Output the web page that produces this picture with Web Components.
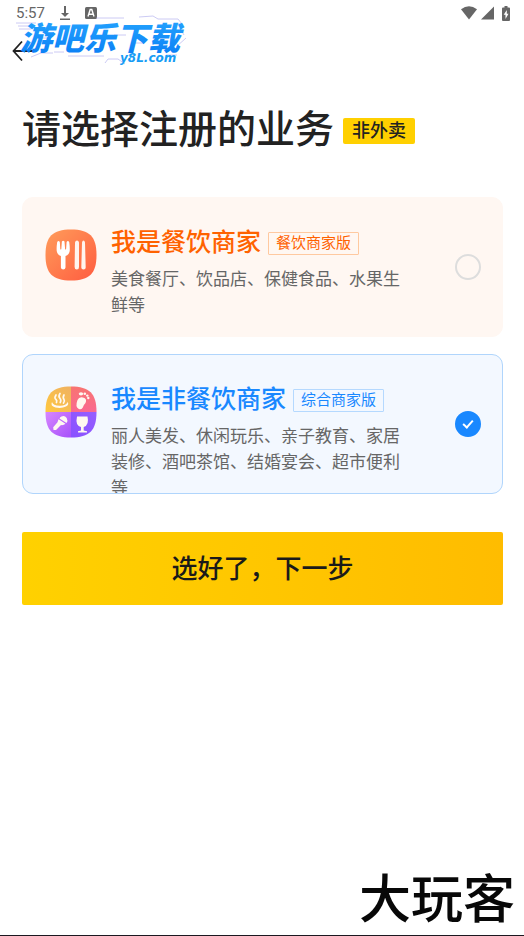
<!DOCTYPE html>
<html lang="zh-CN">
<head>
<meta charset="utf-8">
<meta name="viewport" content="width=device-width, initial-scale=1">
<title>请选择注册的业务</title>
<style>
html, body { margin: 0; min-height: 100%; }
body { background: #fff; color: #222; font-family: Roboto, "Noto Sans CJK SC", sans-serif; }
</style>
</head>
<body>
<register-page></register-page>

<template id="t-status">
<style>
:host { display: flex; align-items: center; height: 26px; padding: 0 14px 0 16px; color: #666; font: 15px/26px Roboto, sans-serif; }
svg { display: block; fill: currentColor; }
.left, .right { display: flex; align-items: center; }
.left { gap: 14px; }
.right { margin-left: auto; gap: 4px; }
.bat { margin-left: 4px; }
</style>
<div class="left"><span>5:57</span>
<svg width="12" height="16" viewBox="0 0 12 16"><path d="M5 1h2v7h3l-4 4-4-4h3zM1 13.500h10V15H1z"/></svg>
<svg width="12" height="12" viewBox="0 0 12 12"><rect width="12" height="12" rx="1.500"/><path d="M3 9.500 5.200 2.500h1.600L9 9.500M4 7.200h4" fill="none" stroke="#fff" stroke-width="1.400"/></svg>
</div>
<div class="right">
<svg width="16" height="14" viewBox="0 0 16 14"><path d="M0 3.200Q8-2.600 16 3.200L8 13.500z"/></svg>
<svg width="13" height="14" viewBox="0 0 13 14"><path d="M13 .5v13H0z"/></svg>
<svg class="bat" width="8" height="15" viewBox="0 0 8 15"><path d="M2.500 0h3v1.500H7q1 0 1 1V14q0 1-1 1H1q-1 0-1-1V2.500q0-1 1-1h1.500z"/><path d="M4.800 4 1.700 8.700h1.800V13l3-5.200H4.800z" fill="#fff"/></svg>
</div>
</template>

<template id="t-watermark">
<style>
:host { position: absolute; left: 16px; top: 12px; display: block; width: 176px; height: 56px; pointer-events: none; }
svg { display: block; width: 100%; height: 100%; }
text { font-family: "Noto Sans CJK SC", sans-serif; font-style: italic; font-weight: 900; }
.site { font-family: "DejaVu Sans", sans-serif; font-weight: 700; }
</style>
<svg viewBox="0 0 176 56">
<defs><linearGradient id="g" x1="0" y1="0" x2="0" y2="1"><stop offset="0" stop-color="#28a9ff"/><stop offset="1" stop-color="#087cf5"/></linearGradient></defs>
<g fill="none" stroke="#aaa9ed" stroke-width="1" opacity=".6"><path d="M0 11h20M2 14h14M3 17h12M15 45l10-4h12M38 40h10M52 44h36M89 51l3-4h10l7 5M80 6h28M123 5l14-1 5 3h20l4 5h-9M98 23h12M160 35l10-9M164 16l4 7M22 26h12M115 31h13M150 43h11"/></g>
<text x="4" y="38" font-size="32" fill="url(#g)">游吧乐下载</text>
<text class="site" x="104" y="50" font-size="12" fill="#169cf5">y8L.com</text>
</svg>
</template>

<template id="t-title">
<style>
:host { display: flex; align-items: center; gap: 9px; padding: 26px 0 0; }
h1 { margin: 0; font-size: 39px; line-height: 56px; font-weight: 500; white-space: nowrap; }
span { margin-top: 2px; padding: 0 9px; border-radius: 2px; background: #ffd000; font-size: 18px; line-height: 26px; font-weight: 500; white-space: nowrap; }
</style>
<h1><slot></slot></h1><span><slot name="badge"></slot></span>
</template>

<template id="t-card">
<style>
:host { --accent: #ff6200; --line: #ffc9a0; --fill: #fff7f2; --edge: #fff7f2; display: block; }
:host([tone="blue"]) { --accent: #1988ff; --line: #b5d9ff; --fill: #f3f8ff; --edge: #b0d5fc; }
label { display: flex; box-sizing: border-box; height: 140px; padding: 28px 21px 0 22px; overflow: hidden; border: 1px solid var(--edge); border-radius: 11px; background: var(--fill); cursor: pointer; }
.icon { flex: none; padding-top: 3px; }
.body { flex: 0 1 300px; margin-left: 14px; }
.head { display: flex; align-items: center; gap: 7px; }
h2 { margin: 0; color: var(--accent); font-size: 25px; line-height: 34px; font-weight: 500; white-space: nowrap; }
.tag { padding: 0 7px; border: 1px solid var(--line); border-radius: 1px; color: var(--accent); font-size: 15px; line-height: 21px; white-space: nowrap; }
p { margin: 6px 0 0; color: #666; font-size: 17px; line-height: 26px; }
input { appearance: none; flex: none; align-self: flex-start; box-sizing: border-box; width: 26px; height: 26px; margin: 28px 0 0 auto; border: 2px solid #ddd; border-radius: 50%; display: grid; place-items: center; cursor: pointer; }
input:checked { border-color: #1988ff; background: #1988ff; }
input:checked::before { content: ""; width: 8px; height: 4px; margin-bottom: 3px; border: solid #fff; border-width: 0 0 2px 2px; transform: rotate(-48deg); }
</style>
<label>
<span class="icon"><slot name="icon"></slot></span>
<span class="body"><span class="head"><h2><slot name="name"></slot></h2><span class="tag"><slot name="tag"></slot></span></span><p><slot></slot></p></span>
<input type="radio" name="business">
</label>
</template>

<template id="t-food">
<style>:host, svg { display: block; }</style>
<svg width="52" height="52" viewBox="0 0 52 52"><defs><linearGradient id="f" x1="0" y1="0" x2="1" y2="1"><stop stop-color="#ff9c5a"/><stop offset="1" stop-color="#ff5c40"/></linearGradient></defs>
<path d="M26 .5C44.500.5 51.500 7.500 51.500 26S44.500 51.500 26 51.500.5 44.500.5 26 7.500.5 26 .5z" fill="url(#f)"/>
<path d="M12.200 13q1.400-2 2.600 0l.5 7q.5 1 1 0l.6-7.500q1.300-1.700 2.600 0l.6 7.500q.5 1 1 0l.5-7q1.300-2 2.600 0 .8 5 .5 9-.7 4-4.200 5v11.500q-.2 2-2.300 2t-2.300-2V27q-3.500-1-4.200-5-.3-4 .5-9z" fill="#fff"/>
<path d="M30 13.500q.4-2 2-2t2 2v24.500q0 2.500-2.200 2.500T29.600 38zM37 13.500q.4-2 1.500-2t1.500 2l.7 25q0 2-2.200 2t-2.200-2z" fill="#fff4ee"/></svg>
</template>

<template id="t-leisure">
<style>:host, svg { display: block; }</style>
<svg width="52" height="52" viewBox="0 0 52 52"><defs>
<clipPath id="c"><path d="M26 .5C44.500.5 51.500 7.500 51.500 26S44.500 51.500 26 51.500.5 44.500.5 26 7.500.5 26 .5z"/></clipPath>
<linearGradient id="a" x1="0" y1="1" x2="1" y2="0"><stop stop-color="#ffc83f"/><stop offset="1" stop-color="#efb162"/></linearGradient>
<linearGradient id="b" x1="0" y1="0" x2="0" y2="1"><stop stop-color="#f87570"/><stop offset="1" stop-color="#f96991"/></linearGradient>
<linearGradient id="p" x1="0" y1="0" x2="1" y2="1"><stop stop-color="#d887ff"/><stop offset="1" stop-color="#a650fa"/></linearGradient>
<linearGradient id="v" x1="0" y1="1" x2="1" y2="0"><stop stop-color="#8950ff"/><stop offset="1" stop-color="#965fff"/></linearGradient></defs>
<g clip-path="url(#c)"><path d="M0 0h26v26H0z" fill="url(#a)"/><path d="M26 0h26v26H26z" fill="url(#b)"/><path d="M0 26h26v26H0z" fill="url(#p)"/><path d="M26 26h26v26H26z" fill="url(#v)"/></g>
<g fill="#fff8f0">
<path d="M7 16q-2 4 3.500 5.500 6 1.300 10.500-1 3.500-2 1.500-4.500-1.500 4-8 3.700Q8 19.500 7 16z"/>
<path d="M11 9q-2 3 0 4.500 1.200 1 .5 3M15 7.500q-2 3 0 5 1.500 1.500 .3 4M19 9q-1.500 2.500 0 4.500 1 1.500-.5 3.500" fill="none" stroke="#fff8f0" stroke-width="1.700" stroke-linecap="round"/>
<path d="M32.500 14q1.500-3.500 5.500-2.500 4.500 1 2.500 5.500-2 2-2.700 4.500-1.200 2.800-4.300 1.200-3.500-2-1-8.700z"/>
<ellipse cx="36" cy="7.800" rx="2.200" ry="1.600"/><circle cx="39.800" cy="7.700" r="1.300"/><circle cx="42.300" cy="9.600" r="1.200"/><circle cx="43.300" cy="12" r="1.200"/>
<path d="M16.500 30.500q3-1.500 5.200 1.500 1.500 2.500-.2 5l-7-4.500q.5-1.500 2-2z"/><path d="m13.500 33.300 7 4.500q-2 1.700-4.500 1.300l-5 5-2.500-.2-.3-2.600 4.300-5z"/>
<path d="M32 30.500h10.500q2 8.500-3.800 10.500v3.500l3.300.8v1.200h-9v-1.200l3-.8V41q-6-1.500-4-10.500z"/>
</g></svg>
</template>

<template id="t-page">
<style>
:host { position: relative; display: flex; flex-direction: column; box-sizing: border-box; min-height: 100vh; border-bottom: 1px solid #1c1820; }
nav { display: flex; height: 50px; padding-left: 10px; align-items: center; }
.back { display: grid; padding: 0; border: 0; background: none; color: #222; cursor: pointer; }
form { display: flex; flex-direction: column; padding: 0 21px 0 22px; }
.choices { display: flex; flex-direction: column; gap: 17px; margin: 39px 0 38px; }
.next { padding: 0 0 4px; border: 0; border-radius: 2px; background: linear-gradient(90deg, #ffd100, #ffbc00); color: #1a1a1a; font: 500 26px/69px "Noto Sans CJK SC", sans-serif; cursor: pointer; }
footer { margin-top: auto; padding-right: 9px; color: #080808; font-size: 52px; line-height: 68px; font-weight: 500; text-align: right; }
</style>
<status-bar></status-bar>
<nav><button class="back" type="button" aria-label="返回"><svg width="26" height="24" viewBox="0 0 26 24" fill="none" stroke="currentColor" stroke-width="1.800"><path d="M12 2.500 3.500 12l8.500 9.500M3.500 12H25"/></svg></button></nav>
<form>
<page-title>请选择注册的业务<span slot="badge">非外卖</span></page-title>
<div class="choices">
<business-card><food-icon slot="icon"></food-icon><span slot="name">我是餐饮商家</span><span slot="tag">餐饮商家版</span>美食餐厅、饮品店、保健食品、水果生鲜等</business-card>
<business-card tone="blue" checked><leisure-icon slot="icon"></leisure-icon><span slot="name">我是非餐饮商家</span><span slot="tag">综合商家版</span>丽人美发、休闲玩乐、亲子教育、家居装修、酒吧茶馆、结婚宴会、超市便利等</business-card>
</div>
<button class="next" type="button">选好了，下一步</button>
</form>
<footer>大玩客</footer>
<site-watermark></site-watermark>
</template>

<script>
class TemplateElement extends HTMLElement {
  constructor() {
    super();
    this.attachShadow({ mode: "open" }).append(document.getElementById(this.constructor.template).content.cloneNode(true));
  }
}
const define = (name, template) => customElements.define(name, class extends TemplateElement { static template = template; });
define("status-bar", "t-status");
define("site-watermark", "t-watermark");
define("page-title", "t-title");
define("food-icon", "t-food");
define("leisure-icon", "t-leisure");
customElements.define("business-card", class extends TemplateElement {
  static template = "t-card";
  connectedCallback() {
    this.input = this.shadowRoot.querySelector("input");
    this.input.checked = this.hasAttribute("checked");
    this.input.addEventListener("change", () => {
      for (const card of this.parentNode.querySelectorAll("business-card")) card.input.checked = card === this;
    });
  }
});
define("register-page", "t-page");
</script>
</body>
</html>
